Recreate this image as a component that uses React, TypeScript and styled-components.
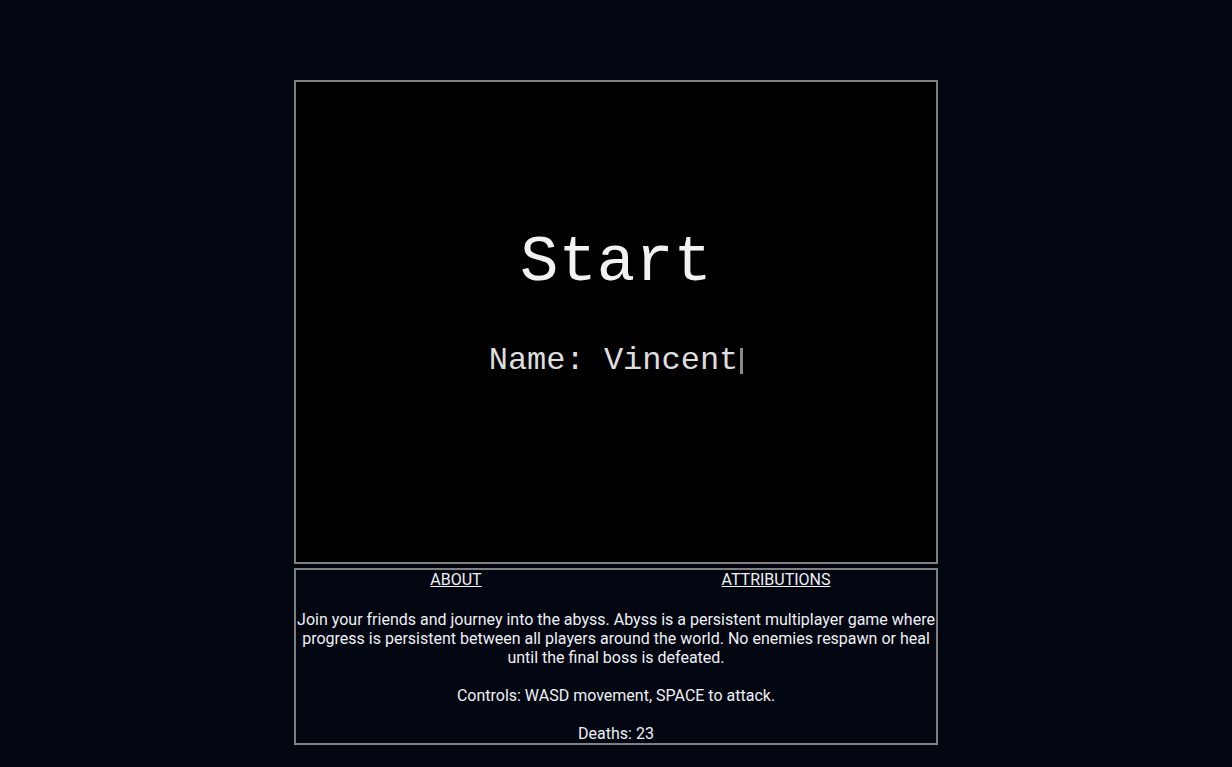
import React from "react";
import styled, { createGlobalStyle } from "styled-components";

const Global = createGlobalStyle`
  html, body {
    margin: 0;
    padding: 0;
    background: #020611;
  }
  body {
    font-family: Roboto, "Liberation Sans", sans-serif;
    color: #eef0f4;
  }
`;

const Page = styled.div`
  display: flex;
  flex-direction: column;
  align-items: center;
  padding-top: 80px;
  gap: 4px;
`;

const Screen = styled.div`
  width: 640px;
  height: 480px;
  border: 2px solid #808080;
  background: #000;
  display: flex;
  flex-direction: column;
  align-items: center;
  font-family: "Liberation Mono", "Courier New", monospace;
`;

const Title = styled.div`
  margin-top: 149px;
  font-size: 64px;
  line-height: 64px;
  color: #f2f2f2;
`;

const NameRow = styled.div`
  margin-top: 50px;
  display: flex;
  align-items: center;
  font-size: 32px;
  line-height: 32px;
  font-weight: normal;
  color: #dedede;
`;

const Cursor = styled.span`
  display: inline-block;
  width: 3px;
  height: 26px;
  margin-left: 2px;
  background: #8a8a8a;
`;

const Info = styled.div`
  width: 640px;
  height: 173px;
  border: 2px solid #808080;
  display: flex;
  flex-direction: column;
  text-align: center;
  font-size: 16px;
  line-height: 19px;
  overflow: hidden;
`;

const Links = styled.div`
  display: flex;
`;

const LinkCell = styled.div`
  flex: 1;
  text-align: center;
`;

const Link = styled.a`
  color: #eef0f4;
  text-decoration: underline;
  cursor: pointer;
`;

const Para = styled.p<{ $gap: number }>`
  margin: ${(p) => p.$gap}px 0 0;
`;

export default function App() {
  return (
    <>
      <Global />
      <Page>
        <Screen>
          <Title>Start</Title>
          <NameRow>
            Name: Vincent
            <Cursor />
          </NameRow>
        </Screen>
        <Info>
          <Links>
            <LinkCell>
              <Link>ABOUT</Link>
            </LinkCell>
            <LinkCell>
              <Link>ATTRIBUTIONS</Link>
            </LinkCell>
          </Links>
          <Para $gap={21}>
            Join your friends and journey into the abyss. Abyss is a persistent multiplayer game where
            progress is persistent between all players around the world. No enemies respawn or heal
            until the final boss is defeated.
          </Para>
          <Para $gap={19}>Controls: WASD movement, SPACE to attack.</Para>
          <Para $gap={19}>Deaths: 23</Para>
        </Info>
      </Page>
    </>
  );
}
